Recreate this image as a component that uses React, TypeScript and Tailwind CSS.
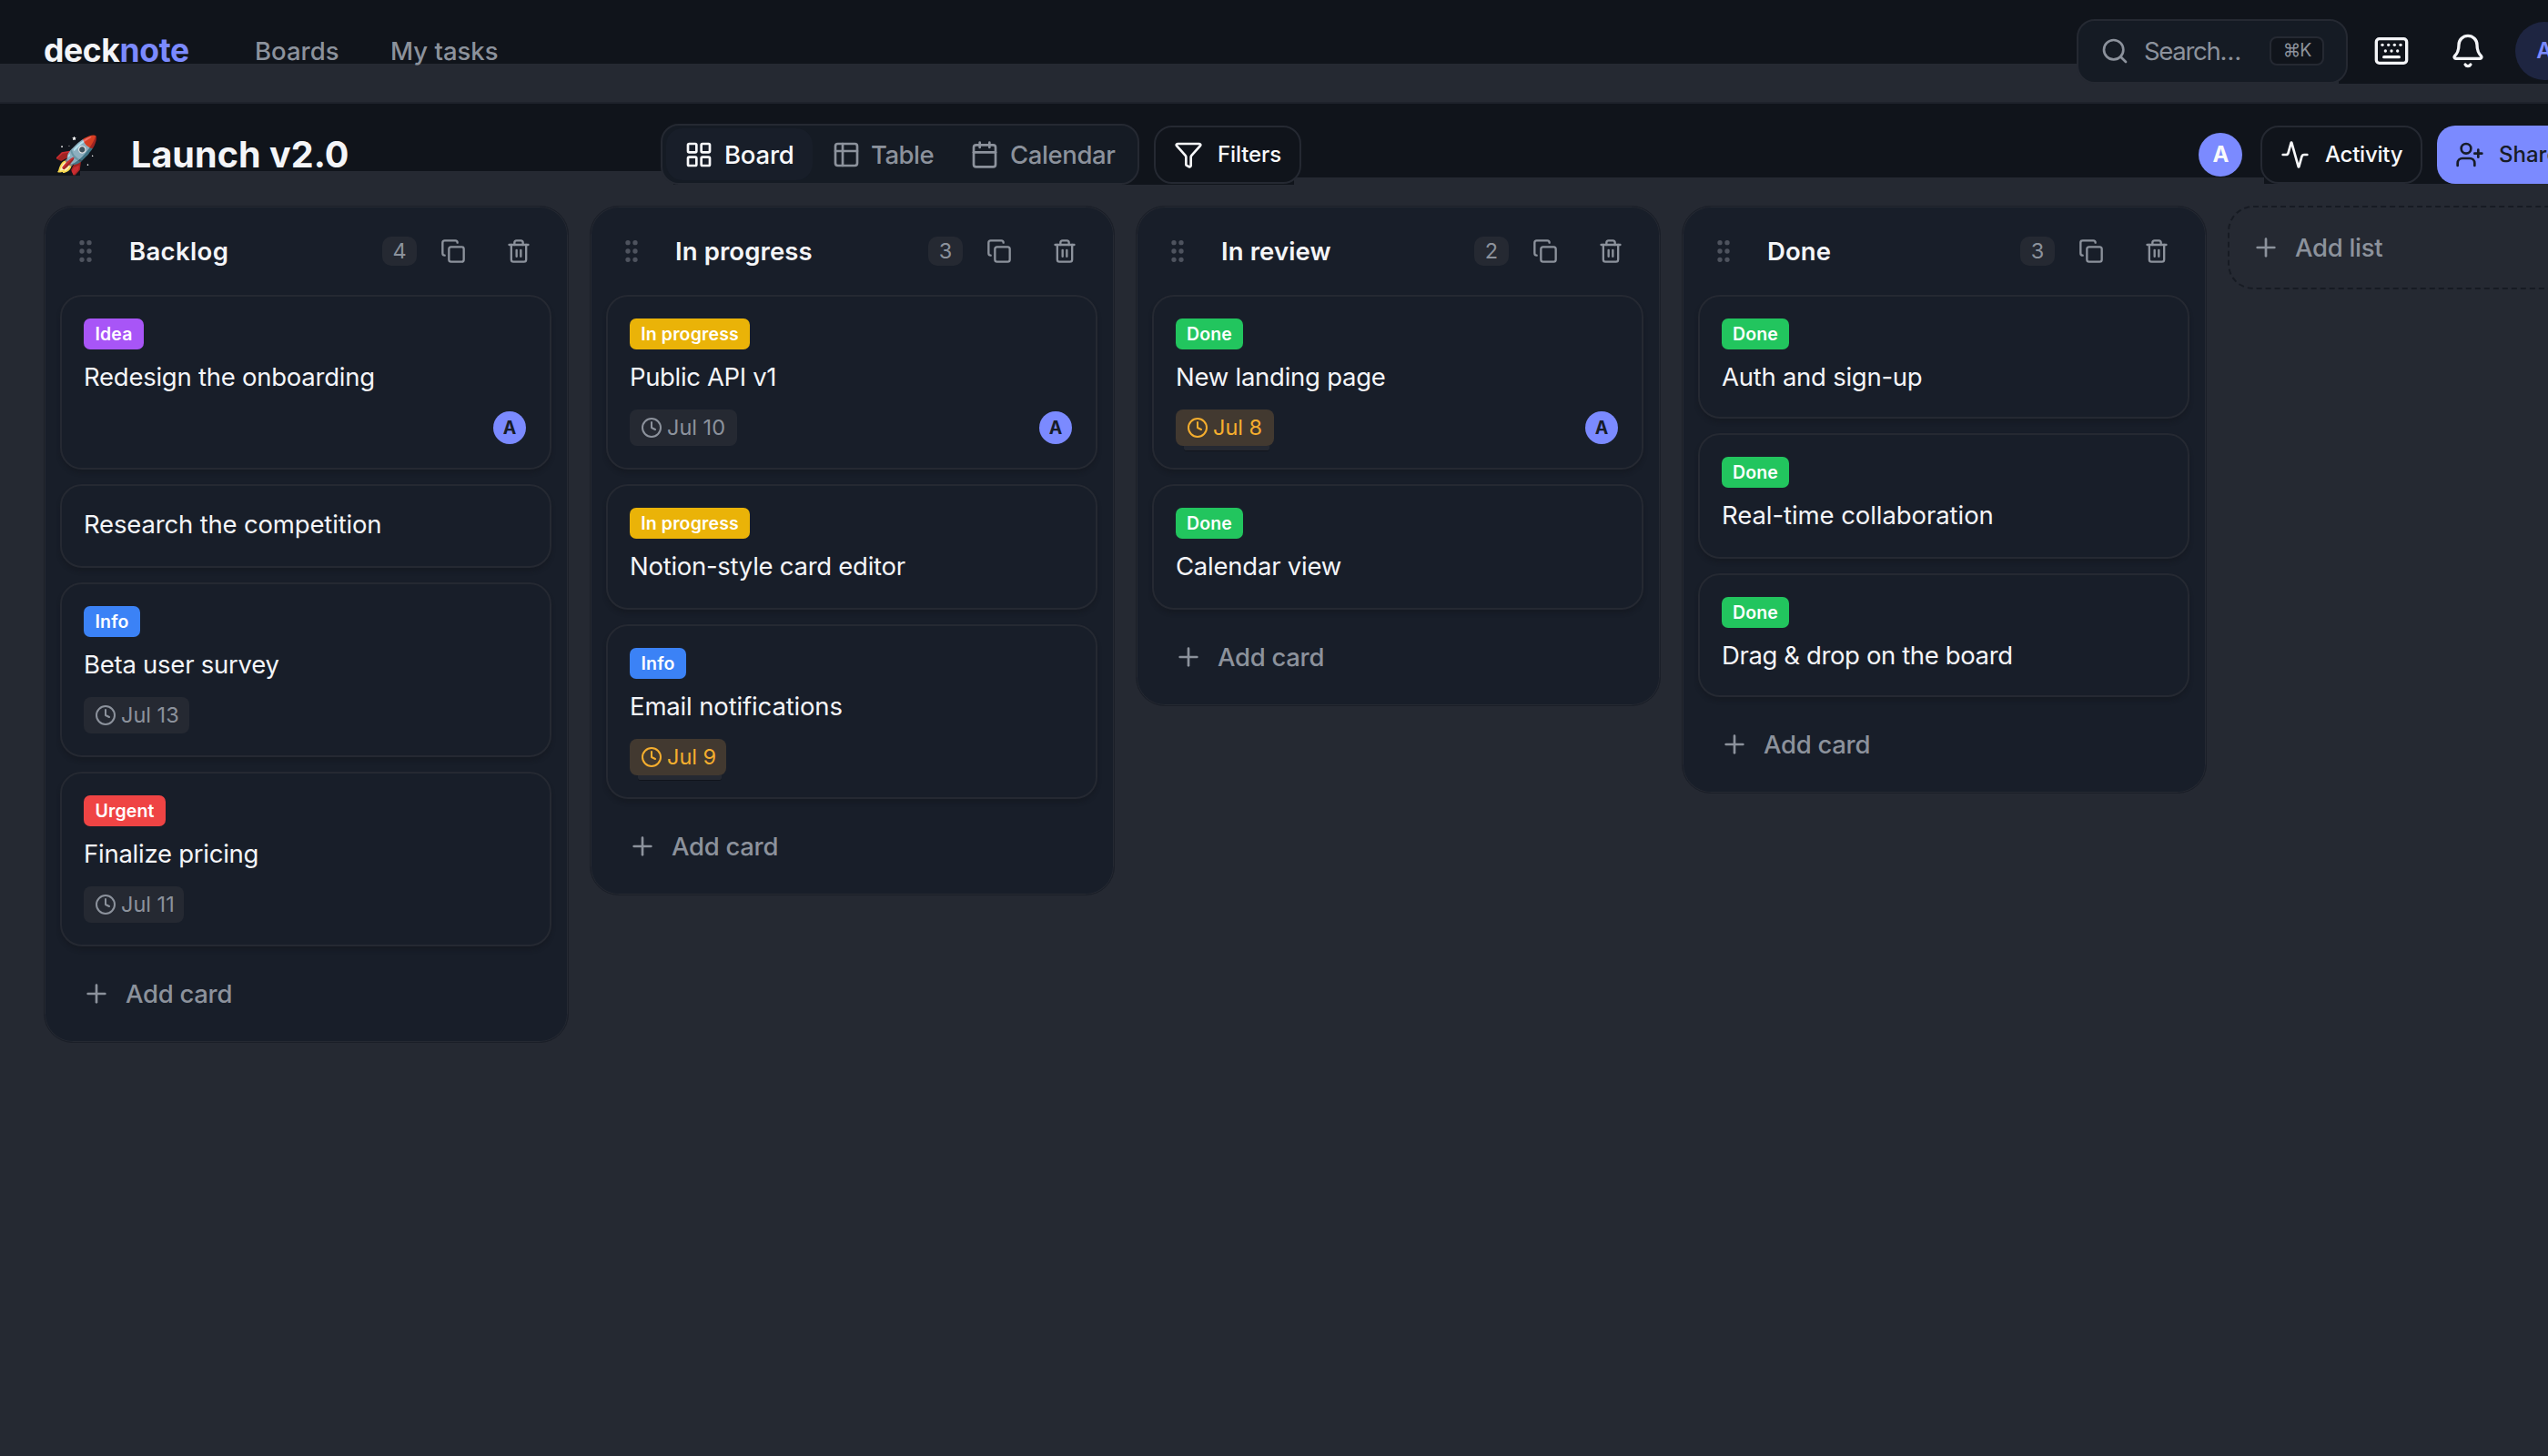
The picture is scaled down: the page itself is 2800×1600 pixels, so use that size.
import React from "react";
import {
  Activity,
  Bell,
  Calendar,
  Clock,
  Copy,
  Funnel,
  GripVertical,
  Keyboard,
  LayoutGrid,
  Plus,
  Search,
  Trash2,
  UserPlus,
} from "lucide-react";

type Label = "idea" | "progress" | "done" | "info" | "urgent";

interface CardData {
  title: string;
  tracking?: string;
  label?: Label;
  date?: string;
  dateWidth?: string;
  soon?: boolean;
  assigned?: boolean;
  height: string;
}

interface ColumnData {
  name: string;
  tracking: string;
  cards: CardData[];
}

const labels: Record<Label, { text: string; style: string }> = {
  idea: { text: "Idea", style: "w-[66px] bg-[#a855f7]" },
  progress: { text: "In progress", style: "w-[132px] bg-[#eab308]" },
  done: { text: "Done", style: "w-[74px] bg-[#22c55e]" },
  info: { text: "Info", style: "w-[62px] bg-[#3b82f6]" },
  urgent: { text: "Urgent", style: "w-[90px] bg-[#ef4444]" },
};

const columns: ColumnData[] = [
  {
    name: "Backlog",
    tracking: "tracking-[0.35px]",
    cards: [
      { title: "Redesign the onboarding", tracking: "tracking-[-0.25px]", label: "idea", assigned: true, height: "h-[192px]" },
      { title: "Research the competition", tracking: "tracking-[-0.17px]", height: "h-[92px]" },
      { title: "Beta user survey", tracking: "tracking-[-0.25px]", label: "info", date: "Jul 13", dateWidth: "w-[116px]", height: "h-[192px]" },
      { title: "Finalize pricing", tracking: "tracking-[-0.25px]", label: "urgent", date: "Jul 11", dateWidth: "w-[110px]", height: "h-[192px]" },
    ],
  },
  {
    name: "In progress",
    tracking: "tracking-[0.1px]",
    cards: [
      { title: "Public API v1", tracking: "tracking-[-0.35px]", label: "progress", date: "Jul 10", dateWidth: "w-[118px]", assigned: true, height: "h-[192px]" },
      { title: "Notion-style card editor", tracking: "tracking-[-0.27px]", label: "progress", height: "h-[138px]" },
      { title: "Email notifications", tracking: "tracking-[-0.15px]", label: "info", date: "Jul 9", dateWidth: "w-[106px]", soon: true, height: "h-[192px]" },
    ],
  },
  {
    name: "In review",
    tracking: "tracking-[0.1px]",
    cards: [
      { title: "New landing page", tracking: "tracking-[-0.25px]", label: "done", date: "Jul 8", dateWidth: "w-[108px]", soon: true, assigned: true, height: "h-[192px]" },
      { title: "Calendar view", tracking: "tracking-[-0.22px]", label: "done", height: "h-[138px]" },
    ],
  },
  {
    name: "Done",
    tracking: "tracking-[0.1px]",
    cards: [
      { title: "Auth and sign-up", tracking: "tracking-[-0.26px]", label: "done", height: "h-[136px]" },
      { title: "Real-time collaboration", tracking: "tracking-[-0.07px]", label: "done", height: "h-[138px]" },
      { title: "Drag & drop on the board", tracking: "tracking-[-0.38px]", label: "done", height: "h-[136px]" },
    ],
  },
];

function TableIcon() {
  return (
    <svg
      width="32"
      height="32"
      viewBox="0 0 24 24"
      fill="none"
      stroke="currentColor"
      strokeWidth="2"
      strokeLinecap="round"
      strokeLinejoin="round"
    >
      <rect x="3" y="3" width="18" height="18" rx="2" />
      <path d="M3 9h18M9 3v18" />
    </svg>
  );
}

function Header() {
  return (
    <header className="h-[112px] bg-[#252932] bg-[linear-gradient(#10141b,#10141b),linear-gradient(#10141b,#10141b)] bg-[length:2570px_70px,230px_92px] bg-[position:0_0,2570px_0] bg-no-repeat">
      <div className="flex h-full w-[2876px] items-center px-[48px]">
        <div className="w-[232px] pb-px text-[35.5px] leading-[40px] font-bold tracking-[-0.35px] text-[#f4f5f8]">
          deck<span className="text-[#7b8aff]">note</span>
        </div>
        <nav className="flex text-[27.5px] leading-[40px] font-medium text-[#8c929c]">
          <span className="w-[149px]">Boards</span>
          <span>My tasks</span>
        </nav>
        <div className="ml-auto flex items-center text-[#f4f5f8]">
          <div className="mr-4 flex h-[71px] w-[298px] items-center rounded-[20px] border-2 border-[#252932] bg-[#151b24] pl-[24px] text-[#8c929c]">
            <Search size={32} />
            <span className="ml-[16px] w-[138px] text-[27.5px] leading-[40px] tracking-[-1.3px]">Search…</span>
            <kbd className="flex h-[32px] w-[60px] items-center justify-center rounded-[8px] border-2 border-[#252932] bg-[#10141b] font-['Inter'] text-[19.5px] tracking-[-1px]">
              ⌘K
            </kbd>
          </div>
          <button className="mr-5 flex size-[64px] items-center justify-center">
            <Keyboard size={40} />
          </button>
          <button className="mr-5 flex size-[64px] items-center justify-center">
            <Bell size={40} />
          </button>
          <div className="flex size-[64px] items-center justify-center rounded-full bg-[#1e2541] text-[24px] font-semibold text-[#7b8aff]">
            A
          </div>
        </div>
      </div>
    </header>
  );
}

function Toolbar() {
  return (
    <div className="h-[114px] border-t-2 border-[#1e222b] bg-[#252932] bg-[linear-gradient(#10141b,#10141b),linear-gradient(#10141b,#10141b),linear-gradient(#10141b,#10141b),linear-gradient(#10141b,#10141b),linear-gradient(#10141b,#10141b)] bg-[length:88px_79px,720px_74px,682px_89px,1070px_81px,312px_88px] bg-[position:0_0,88px_0,740px_0,1418px_0,2488px_0] bg-no-repeat">
      <div className="flex h-[112px] w-[2876px] items-center px-[48px]">
        <span className="w-[96px] pt-px pl-[11px] font-['Noto_Color_Emoji'] text-[40px] leading-none">🚀</span>
        <h1 className="w-[582px] text-[39.5px] leading-[48px] font-bold tracking-[0.05px] text-[#f4f5f8]">Launch v2.0</h1>
        <div className="mb-[2px] flex h-[67px] w-[526px] items-center rounded-[20px] border-2 border-[#252932] bg-[#151b24] p-[4px] text-[27.5px] leading-[40px] font-medium text-[#8c929c]">
          <div className="flex h-[57px] w-[161px] items-center rounded-[18px] bg-[#181e29] pt-[2px] pl-[20px] text-[#f8f9fb]">
            <LayoutGrid size={32} />
            <span className="ml-[12px] tracking-[-0.2px]">Board</span>
          </div>
          <div className="flex w-[152px] items-center pt-[2px] pl-[21px]">
            <TableIcon />
            <span className="ml-[11px] tracking-[-0.5px]">Table</span>
          </div>
          <div className="flex items-center pt-[2px] pl-[21px]">
            <Calendar size={32} />
            <span className="ml-[12px] tracking-[-0.4px]">Calendar</span>
          </div>
        </div>
        <button className="ml-4 flex h-[64px] w-[162px] items-center rounded-[20px] border-2 border-[#252932] bg-[#10141b] pl-[20px] text-[24px] font-medium text-[#f8f9fb]">
          <Funnel size={32} />
          <span className="ml-[16px] tracking-[-0.1px]">Filters</span>
        </button>
        <div className="ml-auto flex items-center text-[24px] font-medium">
          <div className="mr-5 flex size-[48px] items-center justify-center rounded-full bg-[#7b8aff] pl-px font-bold text-[#f8f9fb]">A</div>
          <button className="mr-4 flex h-[64px] w-[178px] items-center rounded-[20px] border-2 border-[#252932] bg-[#10141b] pl-[20px] text-[#f8f9fb]">
            <Activity size={32} />
            <span className="ml-[17px] tracking-[-0.25px]">Activity</span>
          </button>
          <button className="flex h-[64px] w-[150px] items-center rounded-[20px] bg-[#7b8aff] pl-[20px] text-[#171c28]">
            <UserPlus size={32} />
            <span className="ml-[16px]">Share</span>
          </button>
        </div>
      </div>
    </div>
  );
}

function DateChip({ date, width, soon }: { date: string; width?: string; soon?: boolean }) {
  return (
    <div
      className={`${width} relative flex h-[40px] items-center gap-[5px] rounded-[8px] pl-[12px] text-[23.5px] ${
        soon ? "bg-[#423930] text-[#f5ae2e]" : "bg-[#252932] text-[#8c929c]"
      }`}
    >
      <Clock size={24} />
      <span>{date}</span>
      {soon && (
        <div className="absolute right-[5px] bottom-[-6px] left-[9px] h-[6px] rounded-b-[3px] border-b border-[#10141b] bg-[#252932]" />
      )}
    </div>
  );
}

function Card({ card }: { card: CardData }) {
  const label = card.label && labels[card.label];
  return (
    <article
      className={`${card.height} rounded-[24px] border-2 border-[#252932] bg-[#181e29] px-[24px] shadow-[0_4px_4px_rgba(16,20,27,0.35)] ${
        label ? "pt-[24px]" : "pt-[22px]"
      }`}
    >
      {label && (
        <div
          className={`${label.style} mb-[10px] flex h-[34px] items-center justify-center rounded-[7px] pt-[2px] text-[19.5px] font-semibold tracking-[0.15px] text-white`}
        >
          {label.text}
        </div>
      )}
      <h3 className={`${card.tracking ?? "tracking-normal"} text-[27.5px] leading-[40px] whitespace-nowrap text-[#f4f5f8]`}>
        {card.title}
      </h3>
      {(card.date || card.assigned) && (
        <div className="mt-[16px] flex h-[40px] items-center">
          {card.date && <DateChip date={card.date} width={card.dateWidth} soon={card.soon} />}
          {card.assigned && (
            <div className="mr-[2px] ml-auto flex size-[36px] items-center justify-center rounded-full bg-[#7b8aff] pt-[2px] text-[19.5px] font-bold text-[#171c28]">
              A
            </div>
          )}
        </div>
      )}
    </article>
  );
}

function Column({ column }: { column: ColumnData }) {
  return (
    <section className="w-[577px] shrink-0 rounded-[32px] border border-[#1b1f28] bg-[#181e29] pr-[18px] pb-px pl-[17px] shadow-[inset_0_0_0_1px_#252932]">
      <div className="flex h-[97px] items-center text-[#8c929c]">
        <GripVertical size={32} className="ml-[12px] text-[#4e535e]" />
        <h2 className={`${column.tracking} ml-[32px] text-[27.5px] leading-[40px] font-semibold text-[#f4f5f8]`}>{column.name}</h2>
        <div className="ml-auto flex h-[32px] w-[38px] items-center justify-center rounded-[10px] bg-[#252932] text-[23.5px]">
          {column.cards.length}
        </div>
        <button className="ml-[12px] flex size-[56px] items-center justify-center">
          <Copy size={28} />
        </button>
        <button className="mr-[8px] ml-[16px] flex size-[56px] items-center justify-center">
          <Trash2 size={28} />
        </button>
      </div>
      <div className="flex flex-col gap-4">
        {column.cards.map((card) => (
          <Card key={card.title} card={card} />
        ))}
      </div>
      <button className="flex h-[104px] items-center pl-[24px] text-[27.5px] leading-[40px] font-medium tracking-[-0.3px] text-[#8c929c]">
        <Plus size={32} />
        <span className="ml-[16px]">Add card</span>
      </button>
    </section>
  );
}

export default function App() {
  return (
    <div className="h-[1600px] w-[2800px] overflow-hidden bg-[#252932] font-['Inter',sans-serif]">
      <Header />
      <Toolbar />
      <main className="flex w-[3072px] items-start gap-[23px] pl-[48px]">
        {columns.map((column) => (
          <Column key={column.name} column={column} />
        ))}
        <button className="flex h-[92px] w-[576px] items-center rounded-[28px] border-2 border-dashed border-[#171b23] pl-[24px] text-[27.5px] leading-[40px] font-medium tracking-[-0.3px] text-[#8c929c]">
          <Plus size={32} />
          <span className="ml-[16px]">Add list</span>
        </button>
      </main>
    </div>
  );
}
